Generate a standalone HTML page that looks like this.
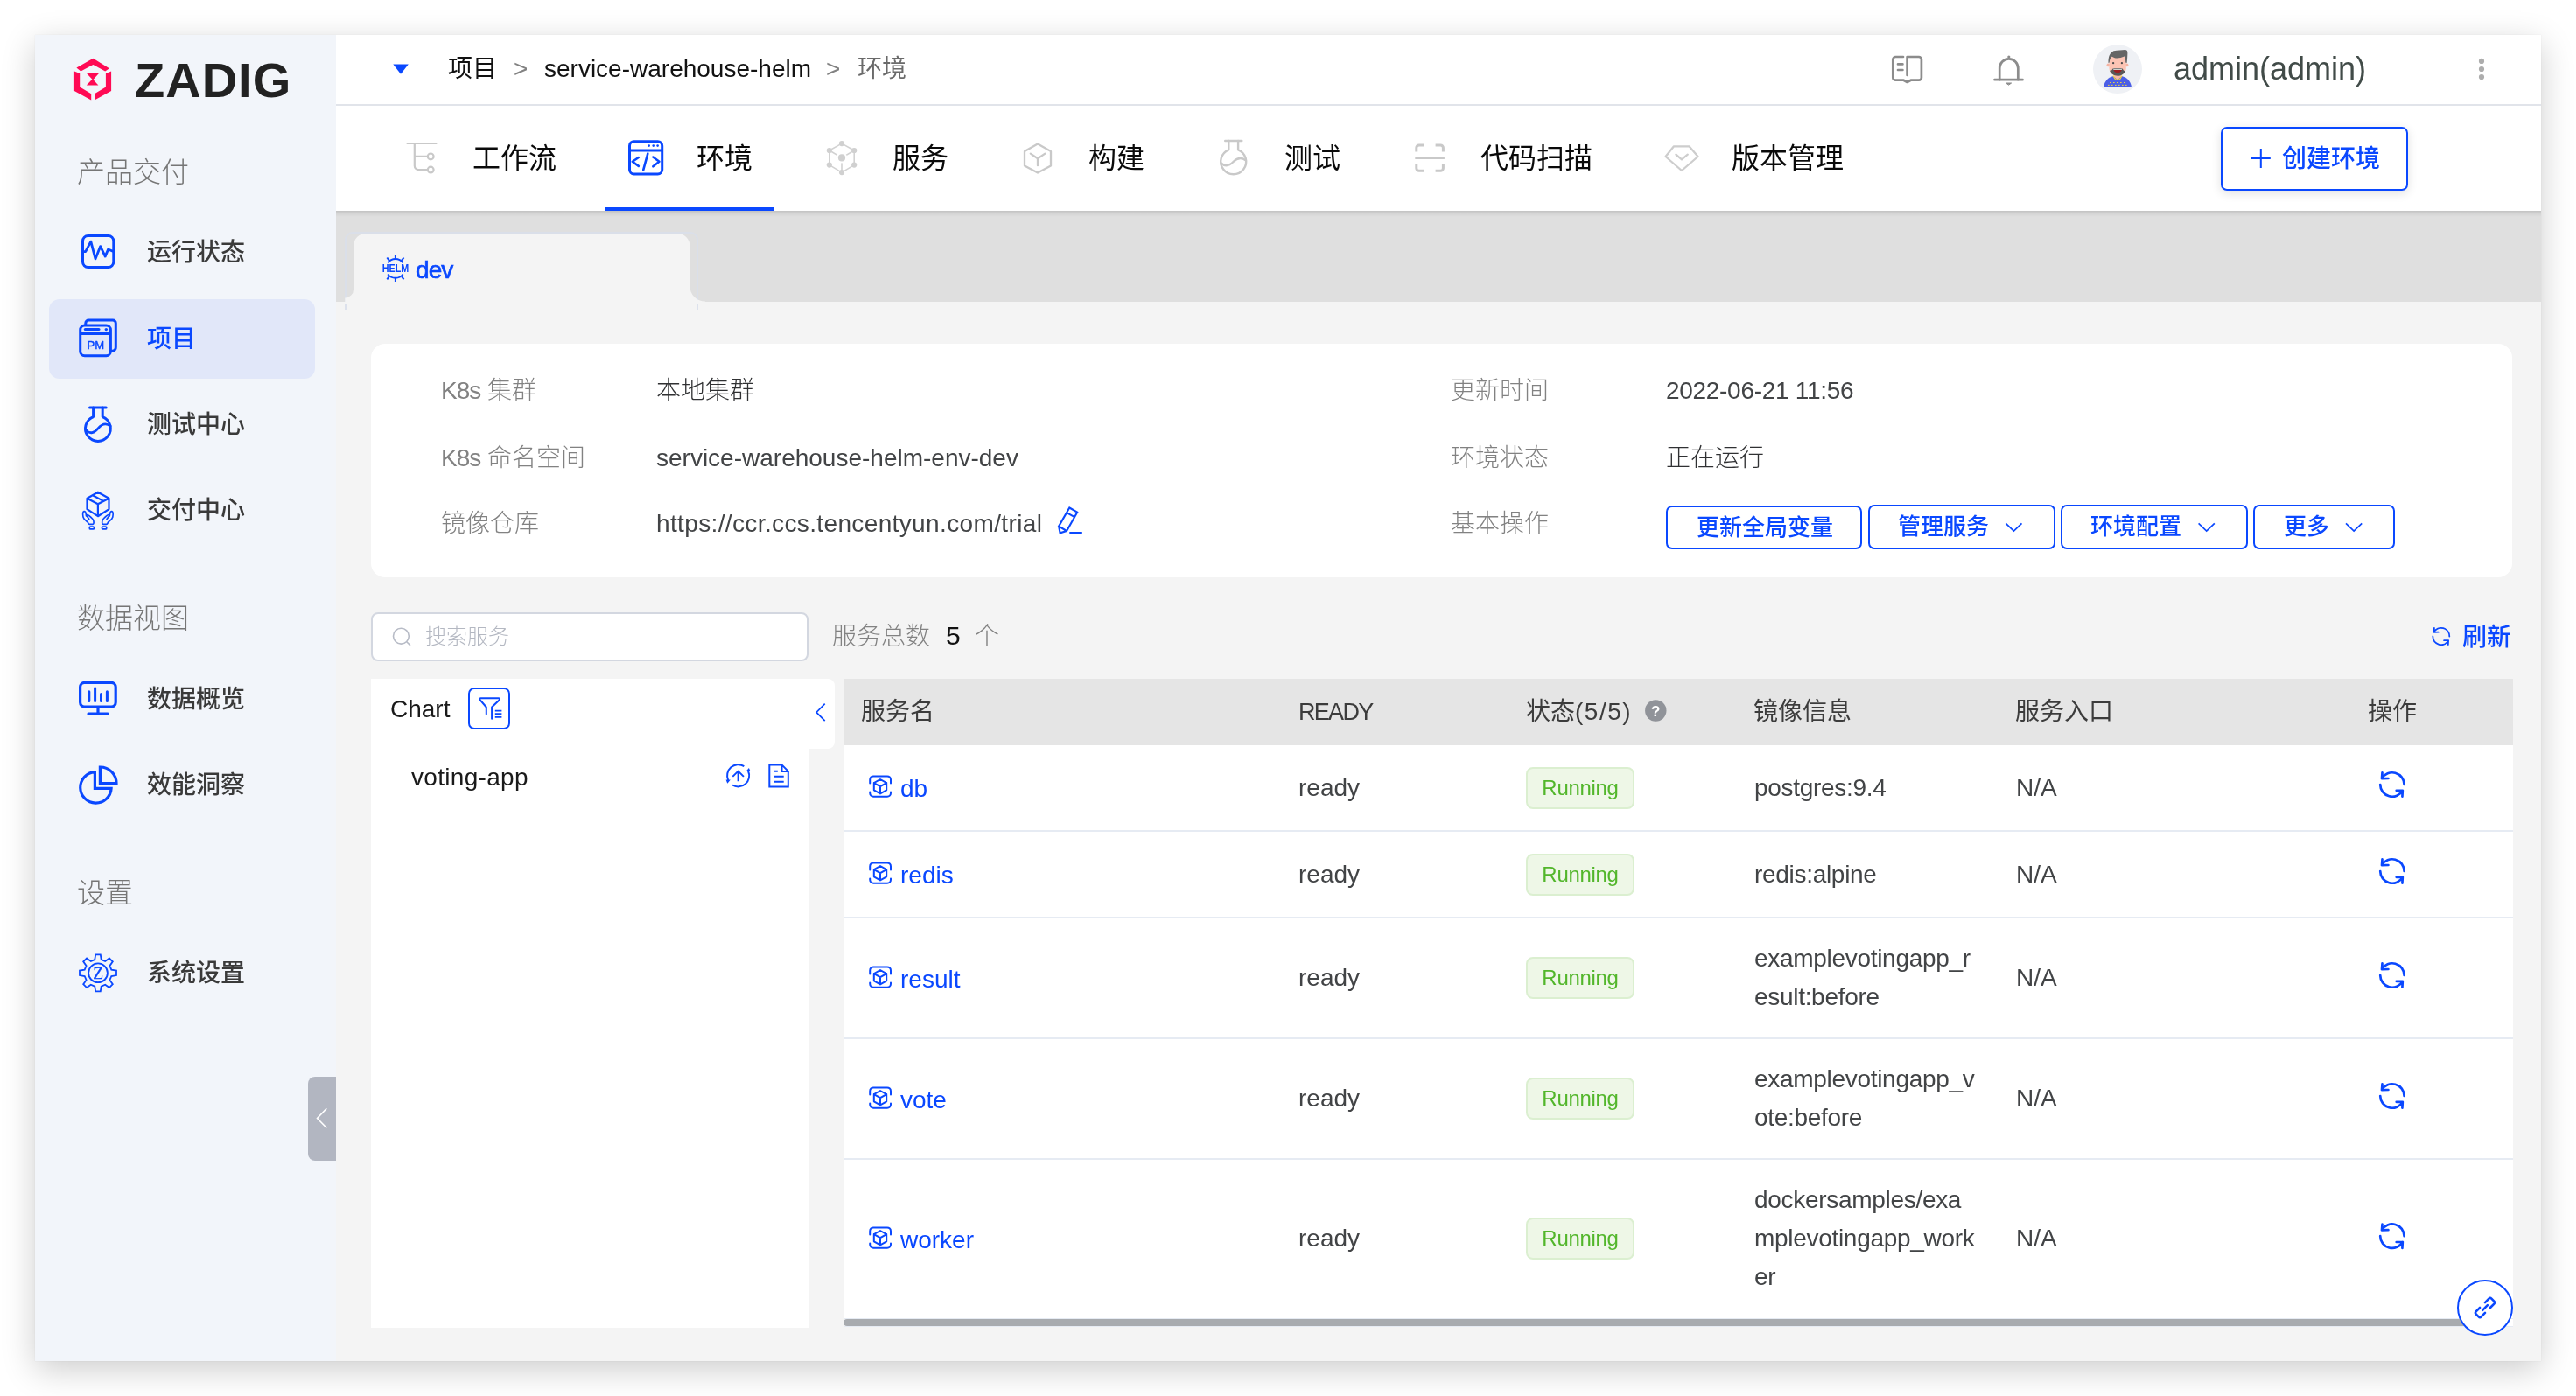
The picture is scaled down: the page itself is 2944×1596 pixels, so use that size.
<!DOCTYPE html>
<html lang="zh-CN">
<head>
<meta charset="utf-8">
<title>Zadig - service-warehouse-helm 环境</title>
<style>
*{box-sizing:border-box;margin:0;padding:0}
html,body{width:2944px;height:1596px;overflow:hidden;background:#fff}
body{position:relative;font-family:"Liberation Sans","Noto Sans CJK SC",sans-serif;font-size:28px;font-weight:300;color:#303133;-webkit-font-smoothing:antialiased}
.abs,.t{position:absolute}
.t{white-space:nowrap;height:40px;line-height:40px}
svg{display:block;overflow:visible}
.win{position:absolute;left:40px;top:40px;width:2864px;height:1516px;background:#f4f4f4;box-shadow:0 10px 36px rgba(0,0,0,.2),0 0 1px rgba(0,0,0,.12)}
/* sidebar */
.side{position:absolute;left:40px;top:40px;width:344px;height:1516px;background:#f2f5fa}
.sec{color:#767676;font-size:32px;left:88px}
.mi{position:absolute;left:56px;width:304px;height:90px;border-radius:12px}
.mi.on{background:#e1e7f9}
.mi span{position:absolute;left:112px;top:26px;height:40px;line-height:40px;font-size:28px;font-weight:500;color:#3a3a3a;white-space:nowrap}
.mi.on span{color:#0a48ff}
.mi svg{position:absolute}
.fold{position:absolute;left:352px;top:1231px;width:32px;height:96px;background:#b2b6c1;border-radius:8px 0 0 8px}
/* top bar */
.top{position:absolute;left:384px;top:40px;width:2520px;height:81px;background:#fff;border-bottom:2px solid #e1e4ea}
.tabs{position:absolute;left:384px;top:121px;width:2520px;height:120px;background:#fff}
.tab{font-size:32px;color:#0a0a0a;top:161px;font-weight:400}
.band{position:absolute;left:384px;top:241px;width:2520px;height:104px;background:linear-gradient(rgba(0,0,0,.13),rgba(0,0,0,.05) 3px,rgba(0,0,0,0) 7px) #dfdfdf}
.blue{color:#0a48ff}
.gray{color:#828282}
.b{font-weight:700}.m{font-weight:500}.l{color:#424446}
.btn{position:absolute;top:578px;height:50px;border:2px solid #0a48ff;border-radius:7px;background:#fff;color:#0a48ff;font-size:26px;font-weight:500;line-height:46px;white-space:nowrap}
.card{position:absolute;left:424px;top:393px;width:2447px;height:267px;background:#fff;border-radius:16px}
.th{font-size:28px;color:#3c3c3c;top:794px;font-weight:400}
.row{position:absolute;left:964px;width:1908px;background:#fff;border-bottom:2px solid #e6ebf3}
.tag{position:absolute;left:1744px;width:124px;height:48px;border:2px solid #dbefd0;background:#eef7e7;border-radius:8px;color:#52b62b;font-size:24px;line-height:44px;text-align:center;letter-spacing:-.3px}
.img{position:absolute;left:2005px;font-size:28px;line-height:44px;color:#424446;white-space:nowrap;letter-spacing:-.3px}
</style>
</head>
<body>
<div id="app" style="position:absolute;left:0;top:0;width:2944px;height:1596px;will-change:transform">
<div class="win"></div>

<!-- SIDEBAR -->
<div class="side"></div>
<div class="t b" style="left:154px;top:70px;font-size:56px;height:44px;line-height:44px;color:#222;letter-spacing:1px">ZADIG</div>
<div class="t sec" style="top:177px">产品交付</div>
<div class="mi" style="top:243px"><span>运行状态</span></div>
<div class="mi on" style="top:342px;height:90.6px"><span>项目</span></div>
<div class="mi" style="top:440px"><span>测试中心</span></div>
<div class="mi" style="top:538px"><span>交付中心</span></div>
<div class="t sec" style="top:687px">数据视图</div>
<div class="mi" style="top:754px"><span>数据概览</span></div>
<div class="mi" style="top:852px"><span>效能洞察</span></div>
<div class="t sec" style="top:1001px">设置</div>
<div class="mi" style="top:1067px"><span>系统设置</span></div>
<div class="fold"></div>

<!-- TOP BAR -->
<div class="top"></div>
<div class="t" style="left:512px;top:59px;font-weight:400;color:#121212">项目</div>
<div class="t gray" style="left:587px;top:59px">&gt;</div>
<div class="t" style="left:622px;top:59px;color:#121212">service-warehouse-helm</div>
<div class="t gray" style="left:944px;top:59px">&gt;</div>
<div class="t" style="left:980px;top:59px;font-weight:400;color:#6a6a6a">环境</div>
<div class="t" style="left:2484px;top:59px;font-size:36px;color:#414b48">admin(admin)</div>

<!-- TABS -->
<div class="tabs"></div>
<div class="abs" style="left:692px;top:237px;width:192px;height:4px;background:#0a48ff"></div>
<div class="t tab" style="left:540px">工作流</div>
<div class="t tab" style="left:796px">环境</div>
<div class="t tab" style="left:1020px">服务</div>
<div class="t tab" style="left:1244px">构建</div>
<div class="t tab" style="left:1468px">测试</div>
<div class="t tab" style="left:1692px">代码扫描</div>
<div class="t tab" style="left:1979px">版本管理</div>
<div class="abs" style="left:2538px;top:145px;width:214px;height:73px;border:2px solid #0a48ff;border-radius:7px;background:#fff;box-shadow:0 3px 12px rgba(0,0,0,.12)"></div>
<div class="t blue m" style="left:2608px;top:162px">创建环境</div>

<!-- ENV BAND -->
<div class="band"></div>
<div class="abs" style="left:394px;top:265px;width:404px;height:80px;border:2px solid rgba(214,222,240,.55);border-bottom:0;border-radius:9px 9px 0 0"></div>
<svg class="abs" style="left:384px;top:260px" width="440" height="90" viewBox="384 260 440 90"><path d="M394,345.5 H394.3 V340.6 A9.7,9.7 0 0 0 404,330.5 V281 A14,14 0 0 1 418,267 H774.3 A14,14 0 0 1 788.3,281 V327 A17.6,17.6 0 0 0 805.9,344.6 V345.5 Z" fill="#f4f4f4"/></svg>
<div class="abs" style="left:394px;top:347px;width:1.5px;height:7px;background:#dce1ec"></div><div class="abs" style="left:796.5px;top:347px;width:1.5px;height:7px;background:#dce1ec"></div>
<div class="t blue" style="left:475px;top:289px;font-size:28px;letter-spacing:-.9px;-webkit-text-stroke:.7px #0a48ff">dev</div>

<!-- INFO CARD -->
<div class="card"></div>
<div class="t gray" style="left:504px;top:427px"><span style="letter-spacing:-1px">K8s</span> 集群</div>
<div class="t gray" style="left:504px;top:504px"><span style="letter-spacing:-1px">K8s</span> 命名空间</div>
<div class="t gray" style="left:504px;top:579px">镜像仓库</div>
<div class="t" style="left:750px;top:427px">本地集群</div>
<div class="t l" style="left:750px;top:504px">service-warehouse-helm-env-dev</div>
<div class="t l" style="left:750px;top:579px;letter-spacing:.37px">https://ccr.ccs.tencentyun.com/trial</div>
<div class="t gray" style="left:1658px;top:427px">更新时间</div>
<div class="t gray" style="left:1658px;top:504px">环境状态</div>
<div class="t gray" style="left:1658px;top:579px">基本操作</div>
<div class="t l" style="left:1904px;top:427px;letter-spacing:-.3px">2022-06-21 11:56</div>
<div class="t" style="left:1904px;top:504px">正在运行</div>
<div class="btn" style="left:1904px;width:224px;padding-left:33px">更新全局变量</div>
<div class="btn" style="left:2135px;top:577px;height:51px;line-height:47px;width:214px;padding-left:32px">管理服务</div>
<div class="btn" style="left:2355px;top:577px;height:51px;line-height:47px;width:214px;padding-left:32px">环境配置</div>
<div class="btn" style="left:2575px;top:577px;height:51px;line-height:47px;width:162px;padding-left:33px">更多</div>

<!-- SEARCH ROW -->
<div class="abs" style="left:424px;top:700px;width:500px;height:56px;border:2px solid #d3d7e0;border-radius:8px;background:#fff"></div>
<div class="t" style="left:486px;top:708px;font-size:24px;color:#b4b8c2">搜索服务</div>
<div class="t gray" style="left:951px;top:708px">服务总数</div>
<div class="t" style="left:1081px;top:707px;color:#121212;font-size:30px;letter-spacing:-1px">5</div>
<div class="t gray" style="left:1114px;top:708px">个</div>
<div class="t blue m" style="left:2814px;top:709px">刷新</div>

<!-- CHART PANEL -->
<div class="abs" style="left:424px;top:776px;width:500px;height:742px;background:#fff"></div>
<div class="abs" style="left:424px;top:776px;width:530px;height:80px;background:#fff;border-radius:0 8px 8px 0"></div>
<div class="t" style="left:446px;top:791px;color:#1a1a1a">Chart</div>
<div class="abs" style="left:535px;top:786px;width:48px;height:48px;border:2px solid #0a48ff;border-radius:7px"></div>
<div class="t" style="left:470px;top:869px;color:#1a1a1a;letter-spacing:.3px">voting-app</div>

<!-- TABLE -->
<div class="abs" style="left:964px;top:776px;width:1908px;height:76px;background:#e5e5e5"></div>
<div class="t th" style="left:984px">服务名</div>
<div class="t th" style="left:1484px;font-size:27px;letter-spacing:-1.7px">READY</div>
<div class="t th" style="left:1744px">状态<span style="letter-spacing:1.5px">(5/5)</span></div>
<div class="t th" style="left:2004px">镜像信息</div>
<div class="t th" style="left:2303px">服务入口</div>
<div class="t th" style="left:2706px">操作</div>

<div class="row" style="top:852px;height:99px"></div>
<div class="row" style="top:951px;height:99px"></div>
<div class="row" style="top:1050px;height:138px"></div>
<div class="row" style="top:1188px;height:138px"></div>
<div class="row" style="top:1326px;height:183px"></div>

<div class="t blue" style="left:1029px;top:882px">db</div>
<div class="t blue" style="left:1029px;top:981px">redis</div>
<div class="t blue" style="left:1029px;top:1100px">result</div>
<div class="t blue" style="left:1029px;top:1238px">vote</div>
<div class="t blue" style="left:1029px;top:1398px">worker</div>

<div class="t l" style="left:1484px;top:881px">ready</div>
<div class="t l" style="left:1484px;top:980px">ready</div>
<div class="t l" style="left:1484px;top:1098px">ready</div>
<div class="t l" style="left:1484px;top:1236px">ready</div>
<div class="t l" style="left:1484px;top:1396px">ready</div>

<div class="tag" style="top:877px">Running</div>
<div class="tag" style="top:976px">Running</div>
<div class="tag" style="top:1094px">Running</div>
<div class="tag" style="top:1232px">Running</div>
<div class="tag" style="top:1392px">Running</div>

<div class="img" style="top:879px">postgres:9.4</div>
<div class="img" style="top:978px">redis:alpine</div>
<div class="img" style="top:1074px">examplevotingapp_r<br>esult:before</div>
<div class="img" style="top:1212px">examplevotingapp_v<br>ote:before</div>
<div class="img" style="top:1350px">dockersamples/exa<br>mplevotingapp_work<br>er</div>

<div class="t l" style="left:2304px;top:881px">N/A</div>
<div class="t l" style="left:2304px;top:980px">N/A</div>
<div class="t l" style="left:2304px;top:1098px">N/A</div>
<div class="t l" style="left:2304px;top:1236px">N/A</div>
<div class="t l" style="left:2304px;top:1396px">N/A</div>

<div class="abs" style="left:964px;top:1508px;width:1908px;height:9px;background:#fff;border-bottom:1px solid #e6ebf3"></div>
<div class="abs" style="left:964px;top:1508px;width:1876px;height:8px;background:#a8abaf;border-radius:4px 0 0 4px"></div>
<div class="abs" style="left:2808px;top:1463px;width:64px;height:64px;border:2px solid #0a48ff;border-radius:50%;background:#fff"></div>
<!--OV-->
<svg class="ov" width="2944" height="1596" viewBox="0 0 2944 1596" style="position:absolute;left:0;top:0;pointer-events:none" fill="none" stroke-linecap="round" stroke-linejoin="round">
<g fill="#ff0a54" stroke="none"><polygon points="87.4,77.6 106.4,66.7 124.9,78.2 120.2,81.4 106.4,74 92.3,81.4"/><polygon points="84.9,81.4 91.2,84.1 91.2,99.6 104.2,107.2 104.2,114.6 84.9,103.9"/><polygon points="127.1,81.4 120.9,84.1 120.9,99.6 108,107.2 108,114.6 127.1,103.9"/><polygon points="99.1,84.1 112.9,84.1 106.1,91.4"/><polygon points="98.8,97.6 112.4,97.6 105.7,90.3"/></g>
<g stroke="#0a48ff" stroke-width="3">
<rect x="94.5" y="269.5" width="35.3" height="36" rx="6"/><polyline points="94.5,287.7 97.7,287.7 103.8,276.1 109,295.9 114.7,281.6 120.2,293.1 123.6,285 128.3,287 129.8,287" stroke-width="2.8"/>
<rect x="91.7" y="372" width="34.7" height="34.7" rx="5"/><path d="M97.8,371 V369.6 a3.5,3.5 0 0 1 3.5,-3.5 H128.8 a3.5,3.5 0 0 1 3.5,3.5 V397 a4,4 0 0 1 -4,4.3"/><path d="M91.7,381.6 H126.4" stroke-linecap="butt"/><path d="M97.3,376.6 H113"/><circle cx="121.3" cy="376.6" r="1.7" fill="#0a48ff" stroke="none"/>
<path d="M102.5,466 H121.2"/><path d="M106.6,466 V476.6 A14.4,14.4 0 1 0 117.2,476.6 V466"/><path d="M97.8,491 C103,497.5 108,494.5 112,489.8 S121,483 126.2,487.2" stroke-width="2.8"/>
<path d="M111.9,562.7 L124.5,569.8 V582.1 L111.9,590.2 L99.5,582.1 V569.8 Z M99.5,569.8 L111.9,576.2 L124.5,569.8 M111.9,576.2 V590.2 M105.9,566.2 L118.2,572.9" stroke-width="2.2"/>
<path d="M96,584.6 C94.6,585 94.4,588 95,591.1 C95.6,594 98,595.3 100,596.7 C100.8,597.6 100.8,599.3 102.2,599.3 H106 C107.4,599.3 107.2,597 106.8,595.1 C106.4,593.2 103.5,591 101.2,589.1 C100.3,588.3 99.2,588.2 98.8,589.2 M98.6,590 C98.2,588.5 98.2,586 97.4,585.2 C97,584.7 96.5,584.5 96,584.6 M99.2,590 L101.8,593.4" stroke-width="1.7"/><path d="M96,584.6 C94.6,585 94.4,588 95,591.1 C95.6,594 98,595.3 100,596.7 C100.8,597.6 100.8,599.3 102.2,599.3 H106 C107.4,599.3 107.2,597 106.8,595.1 C106.4,593.2 103.5,591 101.2,589.1 C100.3,588.3 99.2,588.2 98.8,589.2 M98.6,590 C98.2,588.5 98.2,586 97.4,585.2 C97,584.7 96.5,584.5 96,584.6 M99.2,590 L101.8,593.4" stroke-width="1.7" transform="translate(223.8,0) scale(-1,1)"/>
<rect x="102.3" y="602" width="5.1" height="2.9" rx="1" stroke-width="1.7"/><rect x="116.5" y="602" width="5.2" height="2.9" rx="1" stroke-width="1.7"/>
<rect x="91.6" y="780.3" width="40.6" height="27.8" rx="5" stroke-width="3.2"/><path d="M101.8,790.8 V801.4 M108.6,786.8 V801.4 M115.5,793.6 V801.4 M122.4,790.8 V801.4"/><path d="M112,809.7 V816 M101,816.2 H123.2" stroke-width="3.2"/>
<path d="M108.4,882.7 A17.7,17.7 0 1 0 127.1,901.3 H108.4 Z" stroke-width="3.2" stroke-linejoin="miter"/><path d="M114.4,877 A18.6,18.6 0 0 1 133,895.6 H114.4 Z" stroke-width="3.2" stroke-linejoin="miter"/>
</g>
<path d="M108.3,1097.0 L109.2,1091.3 L114.8,1091.3 L115.7,1097.0 L120.2,1098.9 L124.9,1095.5 L128.8,1099.4 L125.4,1104.1 L127.3,1108.6 L133.0,1109.5 L133.0,1115.1 L127.3,1116.0 L125.4,1120.5 L128.8,1125.2 L124.9,1129.1 L120.2,1125.7 L115.7,1127.6 L114.8,1133.3 L109.2,1133.3 L108.3,1127.6 L103.8,1125.7 L99.1,1129.1 L95.2,1125.2 L98.6,1120.5 L96.7,1116.0 L91.0,1115.1 L91.0,1109.5 L96.7,1108.6 L98.6,1104.1 L95.2,1099.4 L99.1,1095.5 L103.8,1098.9Z" stroke="#0a48ff" stroke-width="1.8" stroke-linejoin="miter"/><circle cx="112" cy="1112.3" r="10.9" stroke="#0a48ff" stroke-width="1.8"/>
<path d="M373.3,1267.3 L362.5,1278.5 L373.3,1289.5" stroke="#fff" stroke-width="1.6" stroke-linecap="butt" stroke-linejoin="miter"/>
<polygon points="449.3,73.5 466.8,73.5 458,84.7" fill="#0a48ff"/>
<g stroke="#8c8c8c" stroke-width="2.7"><path d="M2175,65 H2166.3 a3,3 0 0 0 -3,3 V88.7 a3,3 0 0 0 3,3 H2175.5 L2179.6,94 L2183.7,91.7 H2192.9 a3,3 0 0 0 3,-3 V68 a3,3 0 0 0 -3,-3 H2179.6 V86"/><path d="M2169,73.4 H2174.4 M2169,80 H2174.4"/><path d="M2279.5,91.2 H2311.5"/><path d="M2285.2,91.2 V78 A10.55,10.55 0 0 1 2306.3,78 V91.2"/><circle cx="2295.8" cy="65" r="1.6" fill="#8c8c8c" stroke="none"/><path d="M2293,95 H2298.6 L2295.8,97 Z" fill="#8c8c8c" stroke-width="1"/></g>
<g transform="translate(2385,45)" stroke="none"><circle cx="35" cy="34.1" r="28" fill="#eff1f5"/><path d="M19,54.6 C20,48 24,43.5 29.5,42.2 H40.5 C46,43.5 50,48 51,54.6 Z" fill="#4c5fe6"/><path d="M30.6,39 H39.4 V42.5 L35,46.6 L30.6,42.5 Z" fill="#f9b9a7"/><path d="M30.2,42 L32.6,46 H37.4 L39.8,42" fill="none" stroke="#f0d43a" stroke-width="1.2"/><g fill="#f0d43a"><rect x="24" y="46" width="1.6" height="1"/><rect x="28" y="46" width="1.6" height="1"/><rect x="40.4" y="46" width="1.6" height="1"/><rect x="44.4" y="46" width="1.6" height="1"/><rect x="26" y="49" width="1.6" height="1"/><rect x="30" y="49" width="1.6" height="1"/><rect x="34" y="49" width="1.6" height="1"/><rect x="38" y="49" width="1.6" height="1"/><rect x="42" y="49" width="1.6" height="1"/><rect x="24" y="51.9" width="1.6" height="1"/><rect x="28" y="51.9" width="1.6" height="1"/><rect x="32" y="51.9" width="1.6" height="1"/><rect x="36" y="51.9" width="1.6" height="1"/><rect x="40" y="51.9" width="1.6" height="1"/><rect x="44" y="51.9" width="1.6" height="1"/></g><circle cx="24.4" cy="29.4" r="1.9" fill="#f5b3a2"/><circle cx="45.6" cy="29.4" r="1.9" fill="#f5b3a2"/><path d="M25.4,20 H44.8 V33 C44.8,38 40,41.5 35,41.5 S25.4,38 25.4,33 Z" fill="#fcc4b4"/><path d="M24.5,27 C24.3,20 26,15.5 30.5,13.3 C35,12.4 40,12.2 43.3,12 C45.8,12 46.6,13.6 46.4,16 C46.2,20 46,24 45.6,27 L44.2,26.5 C44.3,24 43.8,21.5 42.8,19.6 C40,20.6 37,21.6 34.5,21.6 C32,21.6 30,20.6 28.4,19.8 C26.8,21.5 25.8,24 25.7,26.5 Z" fill="#656565"/><circle cx="30.1" cy="27.2" r="1.15" fill="#4a4a4a"/><circle cx="39.9" cy="27.2" r="1.15" fill="#4a4a4a"/><path d="M26,35.6 C27.5,36.4 28.6,35 29.6,33.4 C31,32.8 39,32.8 40.6,33.4 C41.6,35 42.6,36.6 43.8,36.2 C42.6,39.5 39,41.8 35,41.8 S27.2,39.5 26,35.6 Z" fill="#585858"/><path d="M30,33.7 H40.2 L39.8,34.8 H30.4 Z" fill="#fbfbf5"/><path d="M30.5,34.9 H39.7 C39,37 37.2,38.2 35.1,38.2 S31.2,37 30.5,34.9 Z" fill="#9c1f22"/></g>
<g fill="#adadad"><circle cx="2836" cy="69.9" r="3.1"/><circle cx="2836" cy="79" r="3.1"/><circle cx="2836" cy="88" r="3.1"/></g>
<g stroke="#c9c9c9" stroke-width="2.2"><path d="M465.5,164 H498.5" /><path d="M473.8,164 V189.6 a4.5,4.5 0 0 0 4.5,4.5 H488.6 M473.8,178.9 H488.6"/><circle cx="492.2" cy="178.9" r="3.4"/><circle cx="492.2" cy="194.1" r="3.4"/></g>
<g stroke="#0a48ff" stroke-width="3"><rect x="719.5" y="161.7" width="37.2" height="37.2" rx="5"/><path d="M719.5,172 H756.7" stroke-linecap="butt"/><path d="M729.8,180 L722.8,184.8 L729.8,189.9 M740.3,175.6 L735.2,194.3 M746.3,179.5 L753.4,184.8 L746.3,190.3" stroke-width="2.6"/><g fill="#0a48ff" stroke="none"><circle cx="741.7" cy="166.6" r="1.3"/><circle cx="746.7" cy="166.6" r="1.3"/><circle cx="751.6" cy="166.6" r="1.3"/></g></g>
<g stroke="#d2d2d2" stroke-width="1.6"><polygon points="962,164.1 976.2,172 976.2,188.6 962,197.1 947.8,188.6 947.8,172"/><path d="M962,180.4 L947.8,172 M962,180.4 L976.2,172 M962,180.4 V197.1"/></g>
<g fill="#fff"><circle cx="962" cy="180.4" r="6.2"/></g>
<g fill="#d0d0d0"><circle cx="962" cy="164.1" r="3.1"/><circle cx="976.2" cy="172" r="3.1"/><circle cx="976.2" cy="188.6" r="3.1"/><circle cx="962" cy="197.1" r="3.1"/><circle cx="947.8" cy="188.6" r="3.1"/><circle cx="947.8" cy="172" r="3.1"/><circle cx="962" cy="180.4" r="4.1"/></g>
<g stroke="#c9c9c9" stroke-width="2.3"><polygon points="1186,164.6 1201,173 1201,189.5 1186,197.6 1171,189.5 1171,173"/><path d="M1177.8,175.6 L1186,181.3 L1194.4,175.6 M1186,181.3 V189.2"/></g>
<g stroke="#c9c9c9" stroke-width="2.4"><path d="M1400.2,161 H1419.3"/><path d="M1404.3,161 V171.3 A14.5,14.5 0 1 0 1415.1,171.3 V161"/><path d="M1395.6,186.5 C1401,191.5 1405.5,189 1409.5,185 S1418.5,179.5 1423.7,183.2"/></g>
<g stroke="#c9c9c9" stroke-width="3" stroke-linecap="butt"><path d="M1627.4,166 H1621.8 a3,3 0 0 0 -3,3 V173.5 M1640.6,166 H1646.4 a3,3 0 0 1 3,3 V173.5 M1618.8,187 V192.2 a3,3 0 0 0 3,3 H1627.4 M1649.4,187 V192.2 a3,3 0 0 1 -3,3 H1640.6 M1617.3,180.4 H1650.9"/></g>
<g stroke="#cdcdcd" stroke-width="2.3"><path d="M1913,167.3 H1930.5 L1940.6,179 L1922,195 L1903.6,179 Z"/><path d="M1915.4,176.7 L1922,182.3 L1928.8,176.7"/></g>
<path d="M2572.8,181 H2594.8 M2583.8,170 V192" stroke="#0a48ff" stroke-width="2" stroke-linecap="butt"/>
<g stroke="#0a48ff" stroke-width="2" stroke-linecap="butt"><path d="M443.2,300.3 A11,11 0 0 1 460.6,300.3 M443.2,313.5 A11,11 0 0 0 460.6,313.5"/><path d="M451.9,291.9 V296 M442.3,294.5 L444.7,297.7 M461.5,294.5 L459.1,297.7 M451.9,317.8 V322 M442.3,319.3 L444.7,316.1 M461.5,319.3 L459.1,316.1"/></g>
<g stroke="#0a48ff" stroke-width="2.1" stroke-linejoin="miter" stroke-linecap="butt"><path d="M1222.3,580.5 L1231.2,585.7 L1219.1,607 L1210.1,601.6 Z M1210.1,601.6 L1211.6,609.3 L1219.1,607 M1220,586.6 L1227.3,590.6 M1222.3,609.1 H1236.8"/></g>
<path d="M2292.3,598.3 l9.1,8.8 l9.1,-8.8" stroke="#0a48ff" stroke-width="1.7" stroke-linecap="butt" stroke-linejoin="miter"/>
<path d="M2512.6,598.3 l9.1,8.8 l9.1,-8.8" stroke="#0a48ff" stroke-width="1.7" stroke-linecap="butt" stroke-linejoin="miter"/>
<path d="M2681,598.3 l9.1,8.8 l9.1,-8.8" stroke="#0a48ff" stroke-width="1.7" stroke-linecap="butt" stroke-linejoin="miter"/>
<g stroke="#b7bbc6" stroke-width="1.6"><circle cx="458.4" cy="727.2" r="8.9"/><path d="M464.8,733.8 L468.5,737.4"/></g>
<path d="M2799.3,727.5 A9.5,9.5 0 0 0 2781.5,722.8 M2781.9,718.0 L2781.5,722.8 L2786.7,722.7 M2780.3,727.5 A9.5,9.5 0 0 0 2798.1,732.2 M2793.1,732.2 L2798.1,732.2 L2797.8,737.0" stroke="#0a48ff" stroke-width="1.8"/>
<g stroke="#0a48ff" stroke-width="2"><path d="M555.8,816.6 V808.5 L548.6,800.2 a1.2,1.2 0 0 1 .9,-1.9 H569.8 a1.2,1.2 0 0 1 .9,1.9 L562.1,808.5 V821.8"/><path d="M565.8,812.6 H573.4 M565.8,816.2 H573.4 M565.8,819.9 H573.4" stroke-width="1.9" stroke-linecap="butt"/></g>
<path d="M942.7,804.6 L933,814.4 L942.7,824.1" stroke="#0a48ff" stroke-width="1.7" stroke-linecap="butt" stroke-linejoin="miter"/>
<g stroke="#0a48ff" stroke-width="2" stroke-linecap="butt"><path d="M850.3,876.1 A12.6,12.6 0 0 0 832.2,892.1 M836.9,897.5 A12.6,12.6 0 0 0 855.0,881.5"/><path d="M843.6,881.6 V893.2 M837.3,887.9 L843.6,881.6 L849.9,887.9"/></g>
<g fill="#0a48ff" stroke="none"><polygon points="852.4,882.1 857.6,882.1 855.9,877.9"/><polygon points="829.6,891.5 834.8,891.5 831.3,895.7"/></g>
<g stroke="#0a48ff" stroke-width="2" stroke-linejoin="miter" stroke-linecap="butt"><path d="M879.3,874.4 H893.5 L900.8,881.9 V899.6 H879.3 Z M893.5,874.4 V881.9 H900.8"/><path d="M884.3,881.8 H888.8 M884.3,887.8 H895.7 M884.3,893.8 H895.7"/></g>
<g stroke="#0a48ff" stroke-width="2"><path d="M994.2,895.6 V891.4 a4,4 0 0 1 4,-4 H1014 a4,4 0 0 1 4,4 V895.6 M994.2,905.6 V906.8 a4,4 0 0 0 4,4 H1014 a4,4 0 0 0 4,-4 V905.6"/><path d="M1006,891.0 L1013.2,895.1 V903.3 L1006,907.4 L998.8,903.3 V895.1 Z M998.8,895.1 L1006,899.2 L1013.2,895.1 M1006,899.2 V907.4"/></g>
<g stroke="#0a48ff" stroke-width="2"><path d="M994.2,994.6 V990.4 a4,4 0 0 1 4,-4 H1014 a4,4 0 0 1 4,4 V994.6 M994.2,1004.6 V1005.8 a4,4 0 0 0 4,4 H1014 a4,4 0 0 0 4,-4 V1004.6"/><path d="M1006,990.0 L1013.2,994.1 V1002.3 L1006,1006.4 L998.8,1002.3 V994.1 Z M998.8,994.1 L1006,998.2 L1013.2,994.1 M1006,998.2 V1006.4"/></g>
<g stroke="#0a48ff" stroke-width="2"><path d="M994.2,1113.6 V1109.4 a4,4 0 0 1 4,-4 H1014 a4,4 0 0 1 4,4 V1113.6 M994.2,1123.6 V1124.8 a4,4 0 0 0 4,4 H1014 a4,4 0 0 0 4,-4 V1123.6"/><path d="M1006,1109.0 L1013.2,1113.1 V1121.3 L1006,1125.4 L998.8,1121.3 V1113.1 Z M998.8,1113.1 L1006,1117.2 L1013.2,1113.1 M1006,1117.2 V1125.4"/></g>
<g stroke="#0a48ff" stroke-width="2"><path d="M994.2,1251.6 V1247.4 a4,4 0 0 1 4,-4 H1014 a4,4 0 0 1 4,4 V1251.6 M994.2,1261.6 V1262.8 a4,4 0 0 0 4,4 H1014 a4,4 0 0 0 4,-4 V1261.6"/><path d="M1006,1247.0 L1013.2,1251.1 V1259.3 L1006,1263.4 L998.8,1259.3 V1251.1 Z M998.8,1251.1 L1006,1255.2 L1013.2,1251.1 M1006,1255.2 V1263.4"/></g>
<g stroke="#0a48ff" stroke-width="2"><path d="M994.2,1411.6 V1407.4 a4,4 0 0 1 4,-4 H1014 a4,4 0 0 1 4,4 V1411.6 M994.2,1421.6 V1422.8 a4,4 0 0 0 4,4 H1014 a4,4 0 0 0 4,-4 V1421.6"/><path d="M1006,1407.0 L1013.2,1411.1 V1419.3 L1006,1423.4 L998.8,1419.3 V1411.1 Z M998.8,1411.1 L1006,1415.2 L1013.2,1411.1 M1006,1415.2 V1423.4"/></g>
<circle cx="1892.3" cy="812.5" r="12.2" fill="#909399"/>
<path d="M2747.6,897.0 A13.7,13.7 0 0 0 2722.0,890.2 M2722.5,883.3 L2722.0,890.2 L2729.4,890.0 M2720.2,897.0 A13.7,13.7 0 0 0 2745.8,903.8 M2738.7,903.8 L2745.8,903.8 L2745.4,910.7" stroke="#0a48ff" stroke-width="2.7"/>
<path d="M2747.6,996.0 A13.7,13.7 0 0 0 2722.0,989.2 M2722.5,982.3 L2722.0,989.2 L2729.4,989.0 M2720.2,996.0 A13.7,13.7 0 0 0 2745.8,1002.8 M2738.7,1002.8 L2745.8,1002.8 L2745.4,1009.7" stroke="#0a48ff" stroke-width="2.7"/>
<path d="M2747.6,1115.0 A13.7,13.7 0 0 0 2722.0,1108.2 M2722.5,1101.3 L2722.0,1108.2 L2729.4,1108.0 M2720.2,1115.0 A13.7,13.7 0 0 0 2745.8,1121.8 M2738.7,1121.8 L2745.8,1121.8 L2745.4,1128.7" stroke="#0a48ff" stroke-width="2.7"/>
<path d="M2747.6,1253.0 A13.7,13.7 0 0 0 2722.0,1246.2 M2722.5,1239.3 L2722.0,1246.2 L2729.4,1246.0 M2720.2,1253.0 A13.7,13.7 0 0 0 2745.8,1259.8 M2738.7,1259.8 L2745.8,1259.8 L2745.4,1266.7" stroke="#0a48ff" stroke-width="2.7"/>
<path d="M2747.6,1413.2 A13.7,13.7 0 0 0 2722.0,1406.4 M2722.5,1399.5 L2722.0,1406.4 L2729.4,1406.2 M2720.2,1413.2 A13.7,13.7 0 0 0 2745.8,1420.0 M2738.7,1420.0 L2745.8,1420.0 L2745.4,1426.9" stroke="#0a48ff" stroke-width="2.7"/>
<g transform="translate(2840,1495) rotate(-45)" stroke="#0a48ff" stroke-width="2.6" fill="none" stroke-linecap="round"><path d="M4.2,-4.2 H10.4 a2.1,2.1 0 0 1 2.1,2.1 V2.1 a2.1,2.1 0 0 1 -2.1,2.1 H4.2 M-4.2,-4.2 H-10.4 a2.1,2.1 0 0 0 -2.1,2.1 V2.1 a2.1,2.1 0 0 0 2.1,2.1 H-4.2 M-4,0 H4"/></g>
<text x="109.4" y="398.8" text-anchor="middle" font-family="Liberation Sans,sans-serif" font-weight="400" font-size="13.5" textLength="19.6" lengthAdjust="spacingAndGlyphs" fill="#0a48ff" stroke="#0a48ff" stroke-width=".45">PM</text><text x="112.3" y="1119.3" text-anchor="middle" font-family="Liberation Serif,serif" font-size="19.5" fill="#0a48ff" stroke="#0a48ff" stroke-width=".3">Z</text><text x="436.8" y="311.4" textLength="30.5" lengthAdjust="spacingAndGlyphs" font-family="Liberation Sans,sans-serif" font-weight="700" font-size="12" fill="#0a48ff" stroke="none">HELM</text><text x="1892.3" y="818.6" text-anchor="middle" font-family="Liberation Sans,sans-serif" font-weight="700" font-size="17" fill="#fff" stroke="none">?</text>
</svg>
<!--/OV-->
</div>
</body>
</html>
